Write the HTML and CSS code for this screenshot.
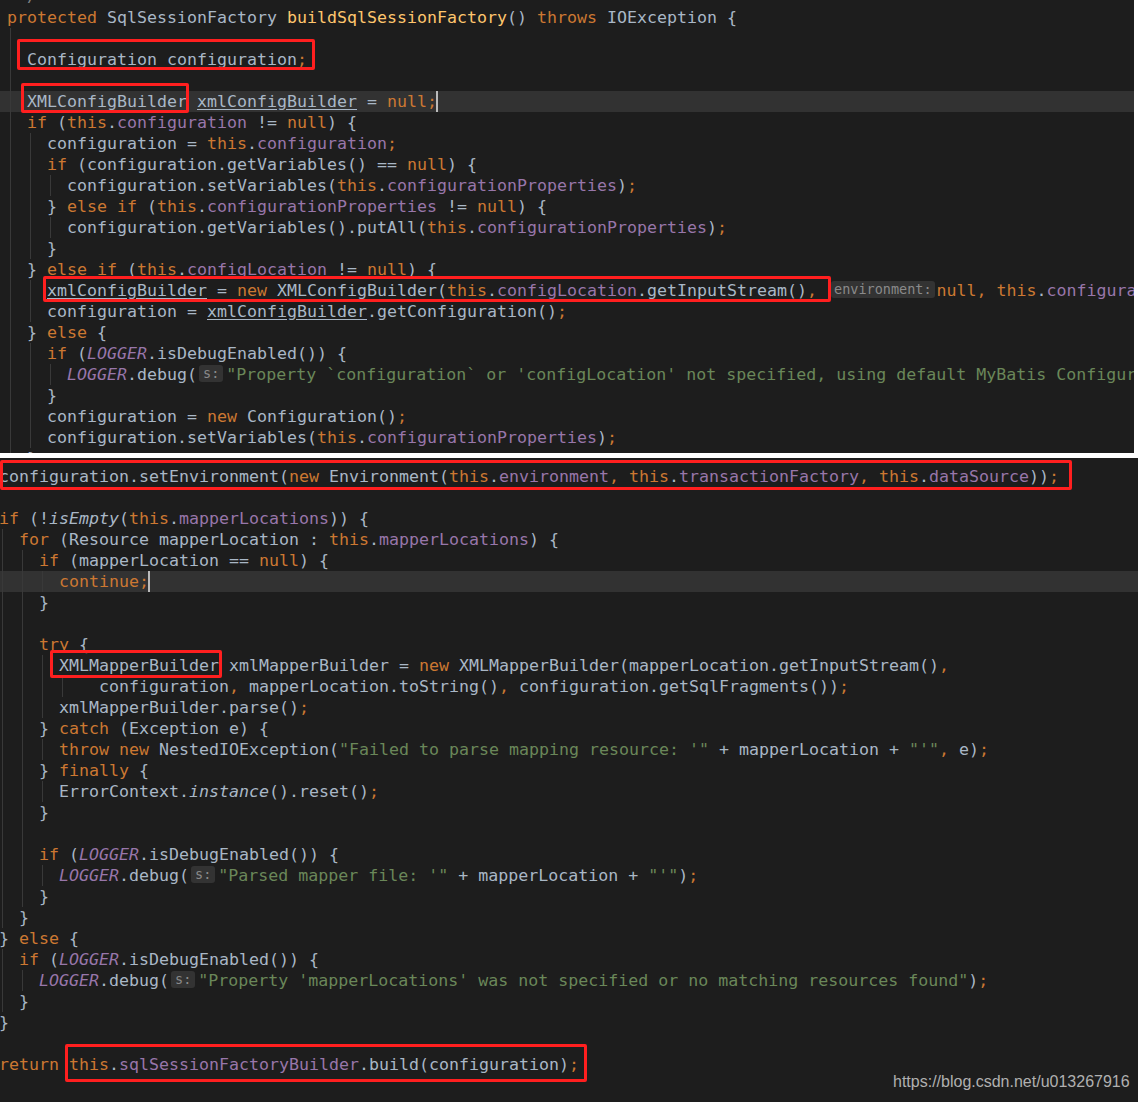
FILE: index.html
```
<!DOCTYPE html>
<html>
<head>
<meta charset="utf-8">
<title>buildSqlSessionFactory</title>
<link rel="stylesheet" href="styles.css">
</head>
<body>
<div class="shot shot-top">
<div class="code code-top">
<div class="ln"><span class="c"> */</span></div>
<div class="ln"><span class="k">protected</span> SqlSessionFactory <span class="m">buildSqlSessionFactory</span>() <span class="k">throws</span> IOException {</div>
<div class="ln"><span class="g"></span></div>
<div class="ln"><span class="g"></span>Configuration configuration<span class="k">;</span></div>
<div class="ln"><span class="g"></span></div>
<div class="ln hl"><span class="g"></span>XMLConfigBuilder <span class="u">xmlConfigBuilder</span> = <span class="k">null;</span><span class="cur"></span></div>
<div class="ln"><span class="g"></span><span class="k">if</span> (<span class="k">this</span>.<span class="f">configuration</span> != <span class="k">null</span>) {</div>
<div class="ln"><span class="g"></span><span class="g"></span>configuration = <span class="k">this</span>.<span class="f">configuration</span><span class="k">;</span></div>
<div class="ln"><span class="g"></span><span class="g"></span><span class="k">if</span> (configuration.getVariables() == <span class="k">null</span>) {</div>
<div class="ln"><span class="g"></span><span class="g"></span><span class="g"></span>configuration.setVariables(<span class="k">this</span>.<span class="f">configurationProperties</span>)<span class="k">;</span></div>
<div class="ln"><span class="g"></span><span class="g"></span>} <span class="k">else if</span> (<span class="k">this</span>.<span class="f">configurationProperties</span> != <span class="k">null</span>) {</div>
<div class="ln"><span class="g"></span><span class="g"></span><span class="g"></span>configuration.getVariables().putAll(<span class="k">this</span>.<span class="f">configurationProperties</span>)<span class="k">;</span></div>
<div class="ln"><span class="g"></span><span class="g"></span>}</div>
<div class="ln"><span class="g"></span>} <span class="k">else if</span> (<span class="k">this</span>.<span class="f">configLocation</span> != <span class="k">null</span>) {</div>
<div class="ln"><span class="g"></span><span class="g"></span><span class="u">xmlConfigBuilder</span> = <span class="k">new</span> XMLConfigBuilder(<span class="k">this</span>.<span class="f">configLocation</span>.getInputStream()<span class="k">,</span> <span class="h h-env">environment:</span><span class="k">null, this</span>.<span class="f">configurationProperties</span>)<span class="k">;</span></div>
<div class="ln"><span class="g"></span><span class="g"></span>configuration = <span class="u">xmlConfigBuilder</span>.getConfiguration()<span class="k">;</span></div>
<div class="ln"><span class="g"></span>} <span class="k">else</span> {</div>
<div class="ln"><span class="g"></span><span class="g"></span><span class="k">if</span> (<span class="st">LOGGER</span>.isDebugEnabled()) {</div>
<div class="ln"><span class="g"></span><span class="g"></span><span class="g"></span><span class="st">LOGGER</span>.debug(<span class="h h-s">s:</span><span class="s">"Property `configuration` or 'configLocation' not specified, using default MyBatis Configuration"</span>)<span class="k">;</span></div>
<div class="ln"><span class="g"></span><span class="g"></span>}</div>
<div class="ln"><span class="g"></span><span class="g"></span>configuration = <span class="k">new</span> Configuration()<span class="k">;</span></div>
<div class="ln"><span class="g"></span><span class="g"></span>configuration.setVariables(<span class="k">this</span>.<span class="f">configurationProperties</span>)<span class="k">;</span></div>
<div class="ln"><span class="g"></span>}</div>
</div>
<div class="box b1"></div>
<div class="box b2"></div>
<div class="box b3"></div>
</div>
<div class="shot shot-bottom">
<div class="code code-bottom">
<div class="ln">configuration.setEnvironment(<span class="k">new</span> Environment(<span class="k">this</span>.<span class="f">environment</span><span class="k">, this</span>.<span class="f">transactionFactory</span><span class="k">, this</span>.<span class="f">dataSource</span>))<span class="k">;</span></div>
<div class="ln"></div>
<div class="ln"><span class="k">if</span> (!<span class="it">isEmpty</span>(<span class="k">this</span>.<span class="f">mapperLocations</span>)) {</div>
<div class="ln"><span class="g"></span><span class="k">for</span> (Resource mapperLocation : <span class="k">this</span>.<span class="f">mapperLocations</span>) {</div>
<div class="ln"><span class="g"></span><span class="g"></span><span class="k">if</span> (mapperLocation == <span class="k">null</span>) {</div>
<div class="ln hl"><span class="g"></span><span class="g"></span><span class="g"></span><span class="k">continue;</span><span class="cur"></span></div>
<div class="ln"><span class="g"></span><span class="g"></span>}</div>
<div class="ln"><span class="g"></span><span class="g"></span></div>
<div class="ln"><span class="g"></span><span class="g"></span><span class="k">try</span> {</div>
<div class="ln"><span class="g"></span><span class="g"></span><span class="g"></span>XMLMapperBuilder xmlMapperBuilder = <span class="k">new</span> XMLMapperBuilder(mapperLocation.getInputStream()<span class="k">,</span></div>
<div class="ln"><span class="g"></span><span class="g"></span><span class="g"></span><span class="g"></span><span class="sp"></span>configuration<span class="k">,</span> mapperLocation.toString()<span class="k">,</span> configuration.getSqlFragments())<span class="k">;</span></div>
<div class="ln"><span class="g"></span><span class="g"></span><span class="g"></span>xmlMapperBuilder.parse()<span class="k">;</span></div>
<div class="ln"><span class="g"></span><span class="g"></span>} <span class="k">catch</span> (Exception e) {</div>
<div class="ln"><span class="g"></span><span class="g"></span><span class="g"></span><span class="k">throw new</span> NestedIOException(<span class="s">"Failed to parse mapping resource: '"</span> + mapperLocation + <span class="s">"'"</span><span class="k">,</span> e)<span class="k">;</span></div>
<div class="ln"><span class="g"></span><span class="g"></span>} <span class="k">finally</span> {</div>
<div class="ln"><span class="g"></span><span class="g"></span><span class="g"></span>ErrorContext.<span class="it">instance</span>().reset()<span class="k">;</span></div>
<div class="ln"><span class="g"></span><span class="g"></span>}</div>
<div class="ln"><span class="g"></span><span class="g"></span></div>
<div class="ln"><span class="g"></span><span class="g"></span><span class="k">if</span> (<span class="st">LOGGER</span>.isDebugEnabled()) {</div>
<div class="ln"><span class="g"></span><span class="g"></span><span class="g"></span><span class="st">LOGGER</span>.debug(<span class="h h-s">s:</span><span class="s">"Parsed mapper file: '"</span> + mapperLocation + <span class="s">"'"</span>)<span class="k">;</span></div>
<div class="ln"><span class="g"></span><span class="g"></span>}</div>
<div class="ln"><span class="g"></span>}</div>
<div class="ln">} <span class="k">else</span> {</div>
<div class="ln"><span class="g"></span><span class="k">if</span> (<span class="st">LOGGER</span>.isDebugEnabled()) {</div>
<div class="ln"><span class="g"></span><span class="g"></span><span class="st">LOGGER</span>.debug(<span class="h h-s">s:</span><span class="s">"Property 'mapperLocations' was not specified or no matching resources found"</span>)<span class="k">;</span></div>
<div class="ln"><span class="g"></span>}</div>
<div class="ln">}</div>
<div class="ln"></div>
<div class="ln"><span class="k">return this</span>.<span class="f">sqlSessionFactoryBuilder</span>.build(configuration)<span class="k">;</span></div>
</div>
<div class="box b4"></div>
<div class="box b5"></div>
<div class="box b6"></div>
<div class="wm">https://blog.csdn.net/u013267916</div>
</div>
</body>
</html>
```

FILE: styles.css
```
html, body {
  margin: 0;
  padding: 0;
  background: #ffffff;
}

body {
  width: 1138px;
  height: 1102px;
  overflow: hidden;
}

.shot {
  position: relative;
  overflow: hidden;
  background: #1d1d1d;
  color: #a9b7c6;
  font-family: "DejaVu Sans Mono", "Liberation Mono", monospace;
  font-size: 16.61px;
  line-height: 21px;
}

.shot-top {
  width: 1134px;
  height: 453px;
  margin-bottom: 5px;
}

.shot-bottom {
  width: 1138px;
  height: 644px;
}

.code-top {
  margin-top: -14px;
}

.code-top .ln {
  padding-left: 7px;
}

.code-bottom {
  padding-top: 8px;
  margin-left: -1px;
}

.ln {
  height: 21px;
  white-space: pre;
}

.hl {
  background: #323232;
}

.g,
.sp {
  display: inline-block;
  width: 20px;
  height: 21px;
  vertical-align: top;
}

.g {
  background: linear-gradient(to right, transparent 3px, #393939 3px, #393939 4px, transparent 4px);
}

.k { color: #cc7832; }
.f { color: #9876aa; }
.s { color: #6a8759; }
.m { color: #ffc66d; }
.c { color: #808080; }
.it { font-style: italic; }
.st { color: #9876aa; font-style: italic; }
.u {
  text-decoration: underline;
  text-underline-offset: 2px;
}

.h {
  display: inline-block;
  vertical-align: top;
  margin-top: 1px;
  height: 17px;
  line-height: 17px;
  font-size: 13.5px;
  color: #8a8a8a;
  background: #333333;
  border-radius: 3px;
}

.h-env {
  padding: 0 3px;
  margin: 1px 2px 0 4px;
}

.h-s {
  padding: 0 4px;
  margin: 1px 3px 0 2px;
}

.cur {
  display: inline-block;
  width: 2px;
  height: 21px;
  margin-left: -1px;
  vertical-align: top;
  background: #bbbbbb;
}

.box {
  position: absolute;
  box-sizing: border-box;
  border: 3px solid #ff1f1f;
  border-radius: 2px;
}

.b1 { left: 17px; top: 39px; width: 298px; height: 31px; }
.b2 { left: 21px; top: 83px; width: 168px; height: 30px; }
.b3 { left: 43px; top: 276px; width: 788px; height: 26px; }
.b4 { left: 0; top: 2px; width: 1072px; height: 30px; }
.b5 { left: 50px; top: 192px; width: 172px; height: 28px; }
.b6 { left: 65px; top: 586px; width: 522px; height: 38px; }

.wm {
  position: absolute;
  left: 893px;
  top: 615px;
  font-family: "Liberation Sans", Arial, sans-serif;
  font-size: 16px;
  line-height: 18px;
  color: #b0b0b0;
  white-space: nowrap;
}
```
